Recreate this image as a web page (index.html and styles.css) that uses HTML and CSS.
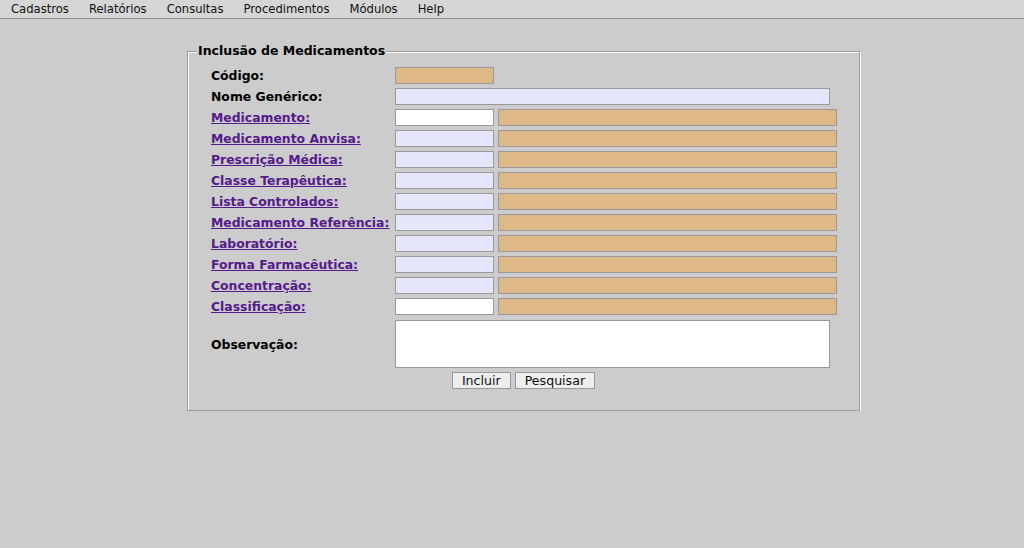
FILE: index.html
```html
<!DOCTYPE html>
<html lang="pt">
<head>
<meta charset="utf-8">
<title>Inclusão de Medicamentos</title>
<link rel="stylesheet" href="styles.css">
</head>
<body>
<nav class="menubar">
  <span class="menu-item">Cadastros</span>
  <span class="menu-item">Relatórios</span>
  <span class="menu-item">Consultas</span>
  <span class="menu-item">Procedimentos</span>
  <span class="menu-item">Módulos</span>
  <span class="menu-item">Help</span>
</nav>
<main class="page">
  <fieldset class="panel">
    <legend class="panel-title">Inclusão de Medicamentos</legend>
    <div class="form">
      <span class="label">Código:</span>
      <div class="fields"><span class="box short ro"></span></div>

      <span class="label">Nome Genérico:</span>
      <div class="fields"><span class="box wide"></span></div>

      <a class="label link" href="#">Medicamento:</a>
      <div class="fields"><span class="box short white"></span><span class="box desc ro"></span></div>

      <a class="label link" href="#">Medicamento Anvisa:</a>
      <div class="fields"><span class="box short"></span><span class="box desc ro"></span></div>

      <a class="label link" href="#">Prescrição Médica:</a>
      <div class="fields"><span class="box short"></span><span class="box desc ro"></span></div>

      <a class="label link" href="#">Classe Terapêutica:</a>
      <div class="fields"><span class="box short"></span><span class="box desc ro"></span></div>

      <a class="label link" href="#">Lista Controlados:</a>
      <div class="fields"><span class="box short"></span><span class="box desc ro"></span></div>

      <a class="label link" href="#">Medicamento Referência:</a>
      <div class="fields"><span class="box short"></span><span class="box desc ro"></span></div>

      <a class="label link" href="#">Laboratório:</a>
      <div class="fields"><span class="box short"></span><span class="box desc ro"></span></div>

      <a class="label link" href="#">Forma Farmacêutica:</a>
      <div class="fields"><span class="box short"></span><span class="box desc ro"></span></div>

      <a class="label link" href="#">Concentração:</a>
      <div class="fields"><span class="box short"></span><span class="box desc ro"></span></div>

      <a class="label link" href="#">Classificação:</a>
      <div class="fields"><span class="box short white"></span><span class="box desc ro"></span></div>

      <span class="label obs-label">Observação:</span>
      <div class="fields obs"><span class="box area"></span></div>
    </div>
    <div class="actions">
      <button class="btn" type="button">Incluir</button>
      <button class="btn" type="button">Pesquisar</button>
    </div>
  </fieldset>
</main>
</body>
</html>
```
FILE: styles.css
```css
html, body {
  margin: 0;
  padding: 0;
  background: #cccccc;
  font-family: "DejaVu Sans", sans-serif;
  color: #000;
}

.menubar {
  display: flex;
  height: 18px;
  background: #d6d6d6;
  border-bottom: 1px solid #8e8e8e;
  padding-left: 1px;
  align-items: center;
}

.menu-item {
  font-size: 11.6px;
  padding: 0 10px;
  color: #111;
  line-height: 18px;
}

.page {
  padding-top: 25px;
  padding-left: 187px;
}

.panel {
  width: 673px;
  height: 367px;
  box-sizing: border-box;
  margin: 0;
  padding: 0 0 0 23px;
  border: 1px solid #999999;
  box-shadow: 1px 1px 0 #ffffff, inset 1px 1px 0 #ffffff;
  min-inline-size: 0;
}

.panel-title {
  font-size: 12.5px;
  font-weight: bold;
  padding: 0 1px 0 2px;
  margin-left: -15px;
  background: #cccccc;
  line-height: 14px;
}

.form {
  display: grid;
  grid-template-columns: 184px auto;
  row-gap: 4px;
  margin-top: 9px;
  align-items: center;
}

.label {
  font-size: 12.4px;
  font-weight: bold;
  line-height: 17px;
  white-space: nowrap;
}

.link {
  color: #551a8b;
  text-decoration: underline;
}

.fields {
  display: flex;
  gap: 4px;
  height: 17px;
}

.box {
  display: block;
  box-sizing: border-box;
  height: 17px;
  border: 1px solid #999999;
  background: #e6e6fa;
}

.short { width: 99px; }
.wide { width: 435px; }
.desc { width: 339px; }
.white { background: #ffffff; }
.ro { background: #deb887; }

.obs {
  height: 48px;
  margin-top: 1px;
}

.area {
  width: 435px;
  height: 48px;
  background: #ffffff;
}

.obs-label {
  margin-top: 1px;
}

.actions {
  display: flex;
  justify-content: center;
  gap: 4px;
  margin-top: 4px;
  margin-left: -23px;
}

.btn {
  font-family: "DejaVu Sans", sans-serif;
  font-size: 12.6px;
  height: 17px;
  padding: 0 9px;
  margin: 0;
  background: #eeeeee;
  border: 1px solid #999999;
  border-radius: 0;
  color: #111;
  line-height: 15px;
}
```
